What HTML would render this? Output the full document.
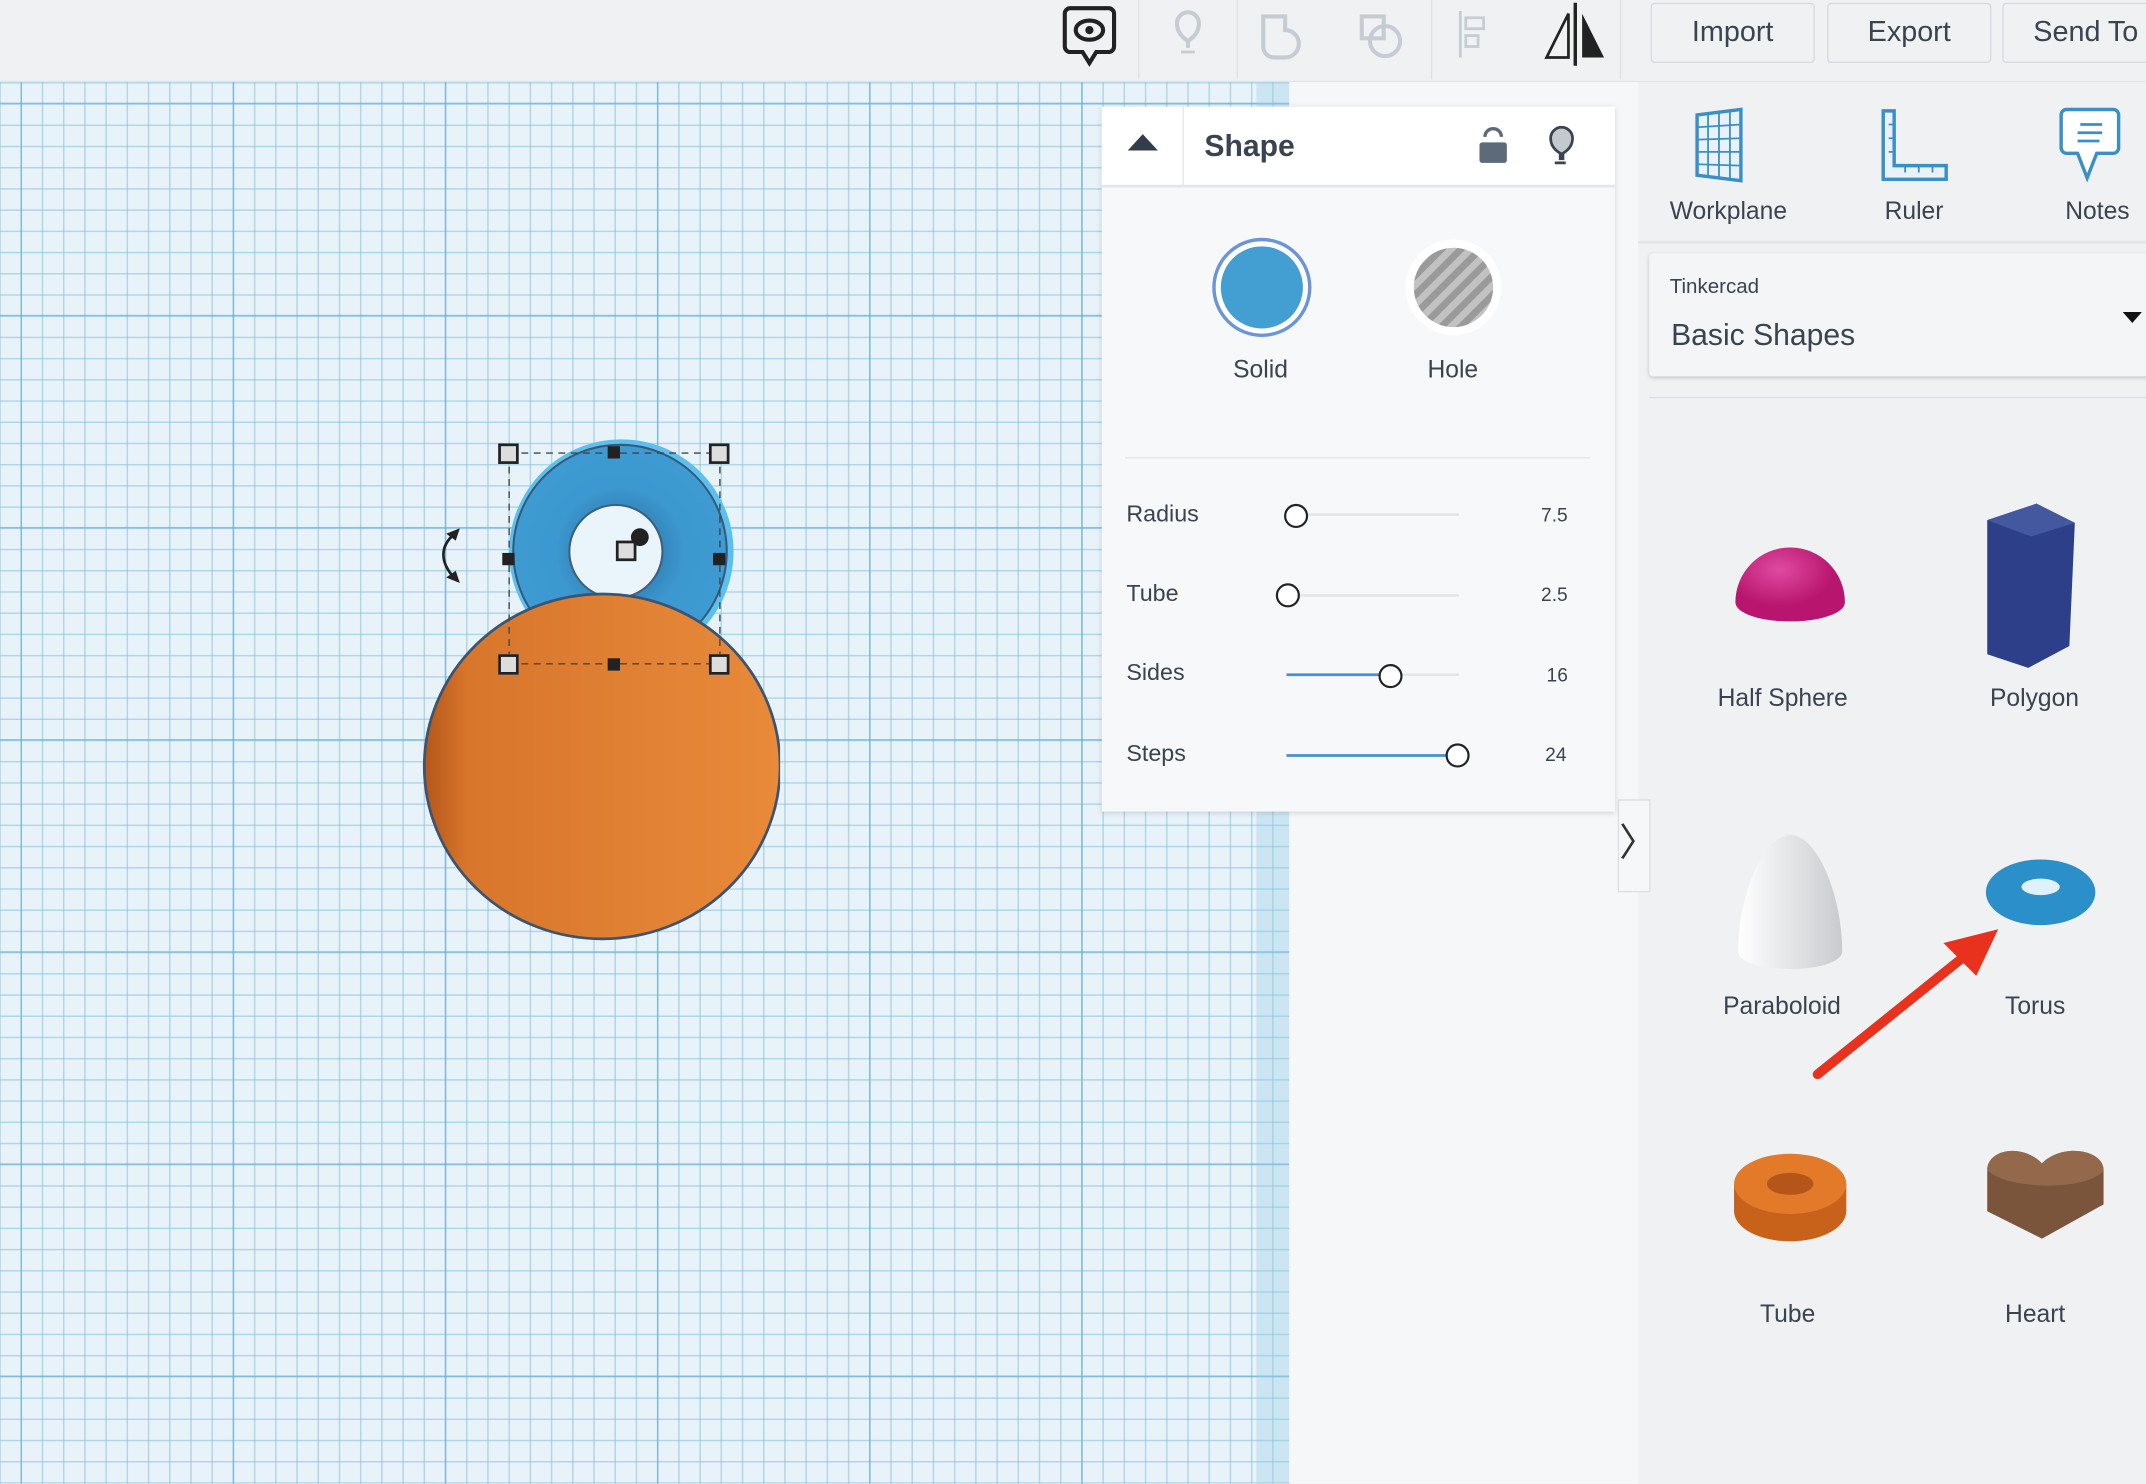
<!DOCTYPE html>
<html><head><meta charset="utf-8"><style>
html,body{margin:0;padding:0;width:2146px;height:1484px;overflow:hidden;background:#f0f1f3;font-family:"Liberation Sans",sans-serif;}
#w{position:absolute;left:0;top:0;width:1568px;height:1084px;transform:scale(1.36862);transform-origin:0 0;}
.a{position:absolute;}
#grid{left:0;top:60px;width:942px;height:1024px;background-color:#e8f3f9;
background-image:linear-gradient(90deg,rgba(100,172,210,.65) 1px,transparent 1px),linear-gradient(rgba(100,172,210,.65) 1px,transparent 1px),linear-gradient(90deg,rgba(120,185,220,.5) 1px,transparent 1px),linear-gradient(rgba(120,185,220,.5) 1px,transparent 1px);
background-size:155px 155px,155px 155px,15.5px 15.5px,15.5px 15.5px;background-position:15px 15px,0 15px,15px 0,0 0;}
.btn{top:2px;height:42px;border:1px solid #d7dadf;border-radius:3px;background:#f0f1f3;font-size:21px;color:#3a4350;line-height:42px;text-align:center;}
.lbl{font-size:18px;color:#3a4350;}
.h{width:11px;height:11px;border:2px solid #222;background:#ddd;}
.s{width:9px;height:9px;background:#222;}
</style></head><body><div id="w">
<div class="a" style="left:0;top:0;width:1568px;height:59px;background:#f0f1f3;border-bottom:2px solid #e2e4e8"></div>
<div class="a" id="grid"></div>
<div class="a" style="left:942px;top:60px;width:255px;height:1024px;background:#f6f7f8"></div>
<div class="a" style="left:918px;top:60px;width:24px;height:1024px;background:rgba(150,205,230,.35)"></div>
<svg class="a" style="left:760px;top:0" width="430" height="60">
<path d="M22 6h28a4 4 0 0 1 4 4v24a4 4 0 0 1-4 4h-9l-5 8-5-8h-9a4 4 0 0 1-4-4V10a4 4 0 0 1 4-4z" fill="none" stroke="#222" stroke-width="3"/>
<ellipse cx="36" cy="22" rx="10" ry="7" fill="none" stroke="#222" stroke-width="3"/><circle cx="36" cy="22" r="3" fill="#222"/>
<line x1="72" y1="0" x2="72" y2="58" stroke="#dfe1e5"/><line x1="144" y1="0" x2="144" y2="58" stroke="#dfe1e5"/><line x1="286" y1="0" x2="286" y2="58" stroke="#dfe1e5"/><line x1="424" y1="0" x2="424" y2="58" stroke="#dfe1e5"/>
<path d="M108 35v-5c-6-4-8-8-8-13a8 8 0 0 1 16 0c0 5-2 9-8 13z" fill="none" stroke="#c5ccd4" stroke-width="3"/><line x1="103" y1="38" x2="113" y2="38" stroke="#c5ccd4" stroke-width="2"/>
<path d="M163 12h16v10a10 10 0 0 1 0 20h-8a8 8 0 0 1-8-8z" fill="none" stroke="#c5ccd4" stroke-width="3"/>
<rect x="235" y="12" width="16" height="16" fill="none" stroke="#c5ccd4" stroke-width="3"/><circle cx="252" cy="30" r="11" fill="none" stroke="#c5ccd4" stroke-width="3"/>
<line x1="307" y1="8" x2="307" y2="42" stroke="#c5ccd4" stroke-width="2"/><rect x="311" y="13" width="13" height="8" fill="none" stroke="#c5ccd4" stroke-width="2"/><rect x="311" y="26" width="9" height="8" fill="none" stroke="#c5ccd4" stroke-width="2"/>
<line x1="391" y1="2" x2="391" y2="48" stroke="#222" stroke-width="2.5"/><path d="M386 10L370 42h16z" fill="none" stroke="#222" stroke-width="2"/><path d="M396 10l16 32h-16z" fill="#222"/>
</svg>
<div class="a btn" style="left:1206px;width:118px">Import</div>
<div class="a btn" style="left:1335px;width:118px">Export</div>
<div class="a btn" style="left:1463px;width:120px">Send To</div>
<div class="a" style="left:1197px;top:60px;width:371px;height:1024px;background:#f0f1f3"></div>
<svg class="a" style="left:1230px;top:76px" width="340" height="62">
<path d="M10 8l32-4v52l-32-4z" fill="#e8f2f8" stroke="#3a8fc6" stroke-width="2.5"/>
<g stroke="#3a8fc6" stroke-width="1.3"><line x1="10" y1="17" x2="42" y2="15"/><line x1="10" y1="26" x2="42" y2="25"/><line x1="10" y1="35" x2="42" y2="35"/><line x1="10" y1="44" x2="42" y2="45"/><line x1="18" y1="7" x2="18" y2="53"/><line x1="26" y1="6" x2="26" y2="54"/><line x1="34" y1="5" x2="34" y2="55"/></g>
<path d="M146 5h8v40h38v10h-46z" fill="#e8f2f8" stroke="#3a8fc6" stroke-width="2.5"/>
<g stroke="#3a8fc6" stroke-width="1.3"><line x1="150" y1="15" x2="155" y2="15"/><line x1="150" y1="25" x2="155" y2="25"/><line x1="150" y1="35" x2="155" y2="35"/><line x1="162" y1="45" x2="162" y2="50"/><line x1="172" y1="45" x2="172" y2="50"/><line x1="182" y1="45" x2="182" y2="50"/></g>
<path d="M288 36h-8a4 4 0 0 1-4-4V8a4 4 0 0 1 4-4h34a4 4 0 0 1 4 4v24a4 4 0 0 1-4 4h-12l-7 18z" fill="#fff" stroke="#3a8fc6" stroke-width="2.5"/>
<g stroke="#3a8fc6" stroke-width="2"><line x1="290" y1="15" x2="306" y2="15"/><line x1="288" y1="21" x2="306" y2="21"/><line x1="288" y1="27" x2="304" y2="27"/></g>
</svg>
<div class="a lbl" style="left:1220px;top:144px">Workplane</div>
<div class="a lbl" style="left:1377px;top:144px">Ruler</div>
<div class="a lbl" style="left:1509px;top:144px">Notes</div>
<div class="a" style="left:1197px;top:176px;width:371px;height:2px;background:#e2e4e8"></div>
<div class="a" style="left:1205px;top:185px;width:370px;height:90px;background:#f4f5f7;border-radius:3px;box-shadow:0 1px 3px rgba(0,0,0,.18)"></div>
<div class="a" style="left:1220px;top:201px;font-size:15px;color:#3a4350">Tinkercad</div>
<div class="a" style="left:1221px;top:232px;font-size:22px;color:#3a4350">Basic Shapes</div>
<div class="a" style="left:1551px;top:228px;width:0;height:0;border-left:7px solid transparent;border-right:7px solid transparent;border-top:8px solid #111"></div>
<div class="a" style="left:1205px;top:290px;width:363px;height:1px;background:#dcdfe3"></div>
<svg class="a" style="left:1240px;top:360px" width="320" height="560">
<defs><radialGradient id="pk" cx=".4" cy=".3"><stop offset="0" stop-color="#e04aa0"/><stop offset="1" stop-color="#b8156e"/></radialGradient>
<linearGradient id="wh" x1="0" x2="1"><stop offset="0" stop-color="#fff"/><stop offset="1" stop-color="#c8cbce"/></linearGradient></defs>
<path d="M28 80a40 40 0 0 1 80 0c0 8-18 14-40 14s-40-6-40-14z" fill="url(#pk)"/>
<path d="M212 20l36-12 28 14-4 90-30 16-30-10z" fill="#2e3f8a"/><path d="M212 20l36-12 28 14-32 10z" fill="#43589f"/>
<path d="M30 335c0-40 18-85 38-85s38 45 38 85c0 8-18 13-38 13s-38-5-38-13z" fill="url(#wh)"/>
<ellipse cx="251" cy="292" rx="40" ry="24" fill="#2b8fc9"/><ellipse cx="251" cy="288" rx="14" ry="6" fill="#dff1fa"/>
<ellipse cx="68" cy="525" rx="41" ry="22" fill="#c8611a"/><rect x="27" y="505" width="82" height="20" fill="#c8611a"/><ellipse cx="68" cy="505" rx="41" ry="22" fill="#e27a2a"/><ellipse cx="68" cy="505" rx="17" ry="8" fill="#b6551a"/>
<path d="M252 545l-40-20v-30c0-15 25-20 40-5 15-15 45-10 45 5v25z" fill="#7a553b"/><path d="M212 495c0-15 25-20 40-5 15-15 45-10 45 5-10 15-70 15-85 0z" fill="#94694b"/>
</svg>
<div class="a lbl" style="left:1255px;top:500px">Half Sphere</div>
<div class="a lbl" style="left:1454px;top:500px">Polygon</div>
<div class="a lbl" style="left:1259px;top:725px">Paraboloid</div>
<div class="a lbl" style="left:1465px;top:725px">Torus</div>
<div class="a lbl" style="left:1286px;top:950px">Tube</div>
<div class="a lbl" style="left:1465px;top:950px">Heart</div>
<svg class="a" style="left:1320px;top:675px" width="140" height="120"><line x1="8" y1="110" x2="120" y2="20" stroke="#e8321e" stroke-width="7" stroke-linecap="round"/><path d="M140 4l-40 10 24 24z" fill="#e8321e"/></svg>
<div class="a" style="left:1182px;top:584px;width:22px;height:66px;background:#f6f7f8;border:1px solid #dcdfe3;font-size:28px;line-height:62px;text-align:center;color:#333">〉</div>
<div class="a" style="left:805px;top:78px;width:375px;height:515px;background:#f7f8f9;box-shadow:0 1px 4px rgba(0,0,0,.15)"></div>
<div class="a" style="left:805px;top:78px;width:375px;height:57px;background:#fff;border-bottom:2px solid #e4e6ea"></div>
<div class="a" style="left:864px;top:78px;width:1px;height:57px;background:#e4e6ea"></div>
<div class="a" style="left:824px;top:98px;width:0;height:0;border-left:11px solid transparent;border-right:11px solid transparent;border-bottom:12px solid #333d4a"></div>
<div class="a" style="left:880px;top:94px;font-size:22px;font-weight:bold;color:#3a4350">Shape</div>
<svg class="a" style="left:1078px;top:90px" width="80" height="32"><path d="M7 10a6 6 0 0 1 12 0" fill="none" stroke="#5d6a7a" stroke-width="2.5"/><rect x="3" y="14" width="20" height="15" rx="2" fill="#5d6a7a"/>
<path d="M62 26v-4c-5-3-7-7-7-11a8 8 0 0 1 16 0c0 4-2 8-7 11v4z" fill="#c4c9cf" stroke="#3a4350" stroke-width="2"/><line x1="58" y1="29" x2="66" y2="29" stroke="#3a4350" stroke-width="2"/></svg>
<svg class="a" style="left:880px;top:168px" width="230" height="84"><defs><pattern id="st" width="10" height="10" patternUnits="userSpaceOnUse" patternTransform="rotate(45)"><rect width="10" height="10" fill="#c2c2c2"/><rect width="5" height="10" fill="#9a9a9a"/></pattern></defs>
<circle cx="42" cy="42" r="35" fill="#fff" stroke="#6a95d9" stroke-width="2.5"/><circle cx="42" cy="42" r="30" fill="#439fd2"/>
<circle cx="182" cy="42" r="35" fill="#fff"/><circle cx="182" cy="42" r="29" fill="url(#st)"/></svg>
<div class="a lbl" style="left:901px;top:260px">Solid</div>
<div class="a lbl" style="left:1043px;top:260px">Hole</div>
<div class="a" style="left:822px;top:334px;width:340px;height:1px;background:#e4e6ea"></div>
<div class="a" style="left:823px;top:366px;font-size:17px;color:#3a4350">Radius</div>
<div class="a" style="left:823px;top:424px;font-size:17px;color:#3a4350">Tube</div>
<div class="a" style="left:823px;top:482px;font-size:17px;color:#3a4350">Sides</div>
<div class="a" style="left:823px;top:541px;font-size:17px;color:#3a4350">Steps</div>
<svg class="a" style="left:930px;top:360px" width="230" height="210" font-family="Liberation Sans" font-size="14" fill="#3a4350">
<g stroke="#e4e6ea" stroke-width="2"><line x1="10" y1="16" x2="136" y2="16"/><line x1="10" y1="75" x2="136" y2="75"/><line x1="10" y1="133" x2="136" y2="133"/><line x1="10" y1="192" x2="136" y2="192"/></g>
<g stroke="#4a8fd0" stroke-width="2"><line x1="10" y1="133" x2="85" y2="133"/><line x1="10" y1="192" x2="135" y2="192"/></g>
<g fill="#fff" stroke="#222" stroke-width="1.6"><circle cx="17" cy="17" r="8"/><circle cx="11" cy="75" r="8"/><circle cx="86" cy="134" r="8"/><circle cx="135" cy="192" r="8"/></g>
<text x="196" y="21">7.5</text><text x="196" y="79">2.5</text><text x="200" y="138">16</text><text x="199" y="196">24</text></svg>
<svg class="a" style="left:300px;top:310px" width="270" height="390">
<defs><radialGradient id="tor" cx=".5" cy=".5"><stop offset=".3" stop-color="#2e7fb5"/><stop offset=".6" stop-color="#3c98cf"/><stop offset="1" stop-color="#3e9bd2"/></radialGradient>
<linearGradient id="or" x1="0" x2="1"><stop offset="0" stop-color="#b5561a"/><stop offset=".12" stop-color="#d8762c"/><stop offset="1" stop-color="#e88a3a"/></linearGradient></defs>
<circle cx="154" cy="93" r="82" fill="#5cc0ee"/><circle cx="153" cy="93" r="78" fill="url(#tor)" stroke="#355a7a" stroke-width="1.5"/><circle cx="150" cy="93" r="34" fill="#e9f5fb" stroke="#3f5e7a" stroke-width="1.5"/>
<ellipse cx="140" cy="250" rx="130" ry="126" fill="url(#or)" stroke="#3c5470" stroke-width="2"/>
<path d="M72 22v155M226 22v155M72 175h154M72 21h154" stroke="#444" stroke-width="1" stroke-dasharray="5 4" fill="none"/>
<path d="M30 82c-8 8-8 18 0 28" fill="none" stroke="#222" stroke-width="2"/><path d="M26 80l10-4-3 9z M26 112l10 4-3-9z" fill="#222"/>
</svg>
<div class="a h" style="left:364px;top:324px"></div><div class="a h" style="left:518px;top:324px"></div>
<div class="a h" style="left:364px;top:478px"></div><div class="a h" style="left:518px;top:478px"></div>
<div class="a s" style="left:444px;top:326px"></div><div class="a s" style="left:444px;top:481px"></div>
<div class="a s" style="left:367px;top:404px"></div><div class="a s" style="left:521px;top:404px"></div>
<div class="a h" style="left:450px;top:395px"></div><div class="a" style="left:461px;top:386px;width:13px;height:13px;border-radius:50%;background:#222"></div>
</div></body></html>
